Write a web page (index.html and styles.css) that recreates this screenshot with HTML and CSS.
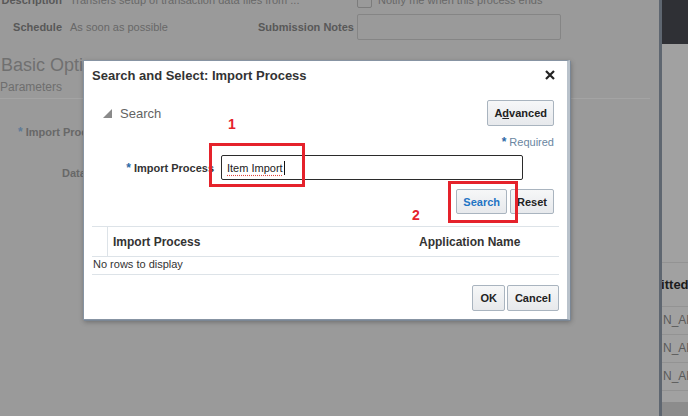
FILE: index.html
```html
<!DOCTYPE html>
<html lang="en">
<head>
    <meta charset="UTF-8">
    <title>Search and Select: Import Process</title>
    <link rel="stylesheet" href="styles.css">
</head>
<body>

    <div class="app">
        <main class="page">
            <div class="form-grid">
                <div class="label">Description</div>
                <div class="value">Transfers setup of transaction data files from ...</div>
                <div></div>
                <div class="notify"><span class="checkbox"></span>Notify me when this process ends</div>

                <div class="label">Schedule</div>
                <div class="value">As soon as possible</div>
                <div class="label">Submission Notes</div>
                <div class="notes"></div>
            </div>

            <h1 class="section-title">Basic Options</h1>
            <div class="section-sub">Parameters</div>

            <div class="params">
                <div class="param-row"><span class="req">*</span> Import Process</div>
                <div class="param-row param-data">Data File</div>
            </div>
        </main>

        <div class="divider"></div>

        <aside class="side">
            <div class="side-header"></div>
            <div class="side-table">
                <div class="side-row side-head">Submitted</div>
                <div class="side-row">N_AP</div>
                <div class="side-row">N_AP</div>
                <div class="side-row">N_AP</div>
            </div>
            <div class="side-foot"></div>
        </aside>
    </div>

    <div class="dialog">
        <div class="dialog-header">
            <span class="dialog-title">Search and Select: Import Process</span>
            <svg class="close" width="10" height="10" viewBox="0 0 10 10">
                <path d="M1 1 L9 9 M9 1 L1 9" stroke="#222" stroke-width="2.2" fill="none"/>
            </svg>
        </div>

        <div class="dialog-body">
            <div class="search-head">
                <div class="toggle">
                    <svg width="9" height="9" viewBox="0 0 9 9"><polygon points="9,0 9,9 0,9" fill="#8a8a8a"/></svg>
                    <span>Search</span>
                </div>
                <button class="btn btn-wide">A<u>d</u>vanced</button>
            </div>

            <div class="required"><span class="req">*</span> Required</div>

            <div class="field">
                <label class="field-label"><span class="req">*</span> Import Process</label>
                <div class="field-input"><span class="typed">Item Import</span><span class="caret"></span></div>
            </div>

            <div class="search-actions">
                <button class="btn btn-primary">Search</button>
                <button class="btn">Reset</button>
            </div>

            <div class="results">
                <div class="results-head">
                    <div class="cell-select"></div>
                    <div class="cell">Import Process</div>
                    <div class="cell">Application Name</div>
                </div>
                <div class="results-empty">No rows to display</div>
            </div>

            <div class="dialog-footer">
                <button class="btn">OK</button>
                <button class="btn">Cancel</button>
            </div>
        </div>
    </div>

    <!-- annotations drawn on the screenshot -->
    <div class="mark mark-box-1"></div>
    <div class="mark mark-box-2"></div>
    <div class="mark-num mark-num-1">1</div>
    <div class="mark-num mark-num-2">2</div>

</body>
</html>
```

FILE: styles.css
```css
body {
    margin: 0;
    width: 688px;
    height: 416px;
    overflow: hidden;
    font-family: "Liberation Sans", Arial, sans-serif;
    font-size: 11px;
    background-color: #9a9a9a;
    color: #333;
}

.app {
    display: flex;
    height: 416px;
}

/* greyed page behind the dialog */
.page {
    width: 659px;
    flex: none;
    color: #656565;
}

.form-grid {
    display: grid;
    grid-template-columns: 62px 180px 91px 204px;
    grid-template-rows: 14px 26px;
    column-gap: 8px;
    row-gap: 7px;
    align-items: center;
    margin-top: -7px;
}

.label {
    font-weight: bold;
    text-align: right;
    color: #585858;
    white-space: nowrap;
}

.value {
    white-space: nowrap;
    color: #686868;
}

.notify {
    display: flex;
    align-items: center;
    gap: 6px;
    white-space: nowrap;
    color: #686868;
}

.checkbox {
    width: 13px;
    height: 13px;
    border: 1px solid #7c7c7c;
    border-radius: 2px;
}

.notes {
    height: 24px;
    border: 1px solid #858585;
    border-radius: 2px;
}

.section-title {
    margin: 14px 0 0 1px;
    font-size: 18px;
    font-weight: normal;
    line-height: 22px;
    color: #707070;
}

.section-sub {
    margin-top: 4px;
    padding-bottom: 3px;
    font-size: 12px;
    line-height: 15px;
    color: #6e6e6e;
    border-bottom: 1px solid #a4a4a4;
    width: 650px;
}

.params {
    padding-top: 25px;
}

.param-row {
    font-weight: bold;
    color: #686868;
    padding-left: 18px;
    line-height: 16px;
}

.param-row .req {
    color: #5e7b98;
}

.param-data {
    padding-left: 62px;
    margin-top: 25px;
}

.divider {
    width: 3px;
    background-color: #5e6670;
    flex: none;
}

.side {
    flex: 1;
    background-color: #a1a1a1;
    display: flex;
    flex-direction: column;
    overflow: hidden;
}

.side-header {
    height: 44px;
    background-color: #2f3035;
}

.side-table {
    margin-top: 218px;
    border-top: 1px solid #939393;
}

.side-row {
    height: 27px;
    line-height: 27px;
    border-bottom: 1px solid #939393;
    white-space: nowrap;
    font-size: 12px;
    color: #5a5a5a;
    padding-left: 1px;
}

.side-head {
    height: 43px;
    line-height: 43px;
    font-weight: bold;
    font-size: 13px;
    color: #1c1c1c;
    padding-left: 0;
    text-indent: -37px;
}

.side-foot {
    margin-top: auto;
    height: 14px;
    background-color: #8c8c8c;
}

/* modal dialog */
.dialog {
    position: absolute;
    left: 83px;
    top: 60px;
    width: 487px;
    height: 260px;
    box-sizing: border-box;
    background-color: #fff;
    border: 1px solid #8794a3;
    border-right: 3px solid #b9c2cb;
    box-shadow: 1px 1px 0 #7a8694, 1px 2px 5px rgba(0, 0, 0, 0.3);
}

.dialog-header {
    display: flex;
    justify-content: space-between;
    align-items: center;
    height: 28px;
    padding: 0 12px 0 8px;
}

.dialog-title {
    font-size: 13px;
    font-weight: bold;
    color: #333;
}

.dialog-body {
    padding: 0 8px 0 8px;
}

.search-head {
    display: flex;
    justify-content: space-between;
    align-items: center;
    margin-top: 11px;
    padding-right: 5px;
    height: 26px;
}

.toggle {
    display: flex;
    align-items: center;
    gap: 8px;
    padding-left: 11px;
    font-size: 13px;
    color: #636363;
}

.btn {
    font-family: "Liberation Sans", Arial, sans-serif;
    font-size: 11px;
    font-weight: bold;
    color: #222;
    height: 26px;
    padding: 0 6px;
    border: 1px solid #a9b4bf;
    border-radius: 2px;
    background: linear-gradient(#f6f7f8, #e7e9ec);
}

.btn-wide {
    padding: 0 6px;
}

.btn u {
    text-decoration: underline;
}

.btn-primary {
    color: #1f74c4;
}

.required {
    margin-top: 8px;
    padding-right: 5px;
    text-align: right;
    line-height: 16px;
    color: #6a86a1;
}

.req {
    color: #2d69a6;
    font-weight: bold;
    font-size: 12px;
}

.field {
    display: flex;
    align-items: center;
    gap: 7px;
    margin-top: 5px;
}

.field-label {
    width: 122px;
    text-align: right;
    font-weight: bold;
    color: #333;
    white-space: nowrap;
}

.field-input {
    width: 302px;
    height: 25px;
    box-sizing: border-box;
    border: 1px solid #2b2b2b;
    border-radius: 2px;
    display: flex;
    align-items: center;
    padding-left: 5px;
    color: #222;
}

.typed {
    text-decoration: underline dotted #e0463d;
    text-underline-offset: 3px;
}

.caret {
    width: 1px;
    height: 14px;
    background-color: #111;
    margin-left: 1px;
}

.search-actions {
    display: flex;
    justify-content: flex-end;
    gap: 3px;
    margin-top: 9px;
    padding-right: 5px;
}

.search-actions .btn {
    height: 25px;
}

.results {
    margin-top: 12px;
    border-top: 1px solid #dde3e8;
    border-bottom: 1px solid #dde3e8;
}

.results-head {
    display: grid;
    grid-template-columns: 16px 306px 1fr;
    height: 29px;
    border-bottom: 1px solid #dde3e8;
    font-size: 12px;
    font-weight: bold;
    color: #333;
}

.cell-select {
    border-right: 1px solid #dde3e8;
}

.cell {
    display: flex;
    align-items: center;
    padding-left: 5px;
}

.results-empty {
    height: 17px;
    line-height: 15px;
    padding-left: 1px;
    color: #333;
}

.dialog-footer {
    display: flex;
    justify-content: flex-end;
    gap: 2px;
    margin-top: 10px;
}

.dialog-footer .btn {
    padding: 0 7px;
}

/* red annotations */
.mark {
    position: absolute;
    border: 3px solid #e5222b;
    box-sizing: border-box;
}

.mark-box-1 {
    left: 209px;
    top: 143px;
    width: 96px;
    height: 44px;
}

.mark-box-2 {
    left: 448px;
    top: 181px;
    width: 70px;
    height: 42px;
}

.mark-num {
    position: absolute;
    color: #e5222b;
    font-weight: bold;
    font-size: 14px;
    line-height: 14px;
}

.mark-num-1 {
    left: 228px;
    top: 117px;
}

.mark-num-2 {
    left: 412px;
    top: 208px;
}
```
